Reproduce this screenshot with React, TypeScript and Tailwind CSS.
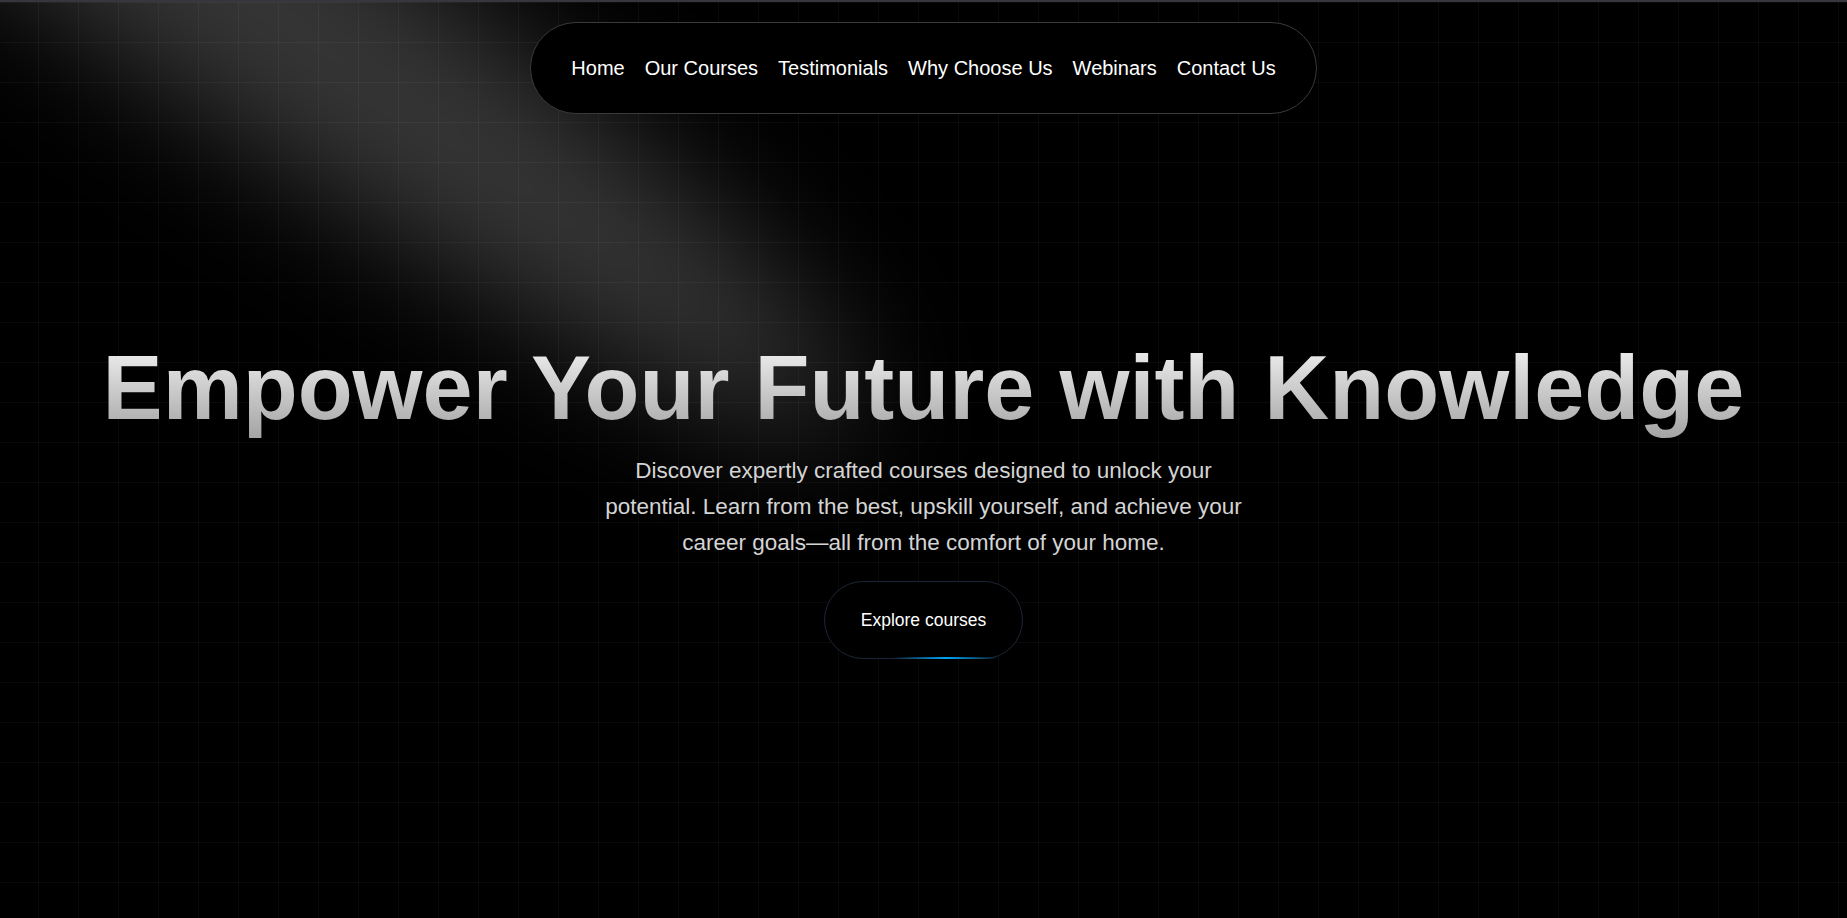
const links = ["Home", "Our Courses", "Testimonials", "Why Choose Us", "Webinars", "Contact Us"];

function Spotlight() {
  return (
    <svg className="pointer-events-none absolute inset-0 h-full w-full" fill="none">
      <defs>
        <filter
          id="spot-blur"
          x="-1200"
          y="-1200"
          width="4200"
          height="3400"
          filterUnits="userSpaceOnUse"
          colorInterpolationFilters="sRGB"
        >
          <feGaussianBlur stdDeviation="64" />
        </filter>
      </defs>
      <g filter="url(#spot-blur)">
        <ellipse
          cx="200"
          cy="-40"
          rx="800"
          ry="122"
          transform="rotate(35 200 -40)"
          fill="white"
          fillOpacity="0.21"
        />
      </g>
    </svg>
  );
}

export default function App() {
  return (
    <div className="relative h-[918px] w-full overflow-hidden border-t-2 border-[#36363c] bg-black bg-[linear-gradient(to_right,rgba(255,255,255,0.04)_1px,transparent_1px),linear-gradient(to_bottom,rgba(255,255,255,0.04)_1px,transparent_1px)] bg-[size:40px_40px] bg-[position:38px_0px] font-['Liberation_Sans',Arial,sans-serif]">
      <Spotlight />

      <div className="relative z-10 flex flex-col items-center">
        <nav className="mt-5 flex items-center gap-5 rounded-full border border-[#3a3a3a] bg-black px-10 py-[31px] text-xl leading-7 text-white">
          {links.map((l) => (
            <a key={l} href="#" className="whitespace-nowrap">
              {l}
            </a>
          ))}
        </nav>

        <h1 className="mt-[220px] bg-linear-to-b from-neutral-50 to-neutral-400 bg-clip-text text-center text-[90px] font-bold leading-[1.2] text-transparent">
          Empower Your Future with Knowledge
        </h1>

        <p className="mt-[11px] max-w-2xl text-center text-[22.5px] leading-9 text-neutral-300">
          Discover expertly crafted courses designed to unlock your potential. Learn from the best, upskill yourself,
          and achieve your career goals—all from the comfort of your home.
        </p>

        <button className="relative mt-5 rounded-full border border-[#1c2636] bg-black px-9 py-[26px] text-[17.5px] leading-6 text-white">
          Explore courses
          <span className="absolute -bottom-px left-[68px] h-[2px] w-[106px] bg-linear-to-r from-transparent via-sky-500 to-transparent" />
        </button>
      </div>
    </div>
  );
}
